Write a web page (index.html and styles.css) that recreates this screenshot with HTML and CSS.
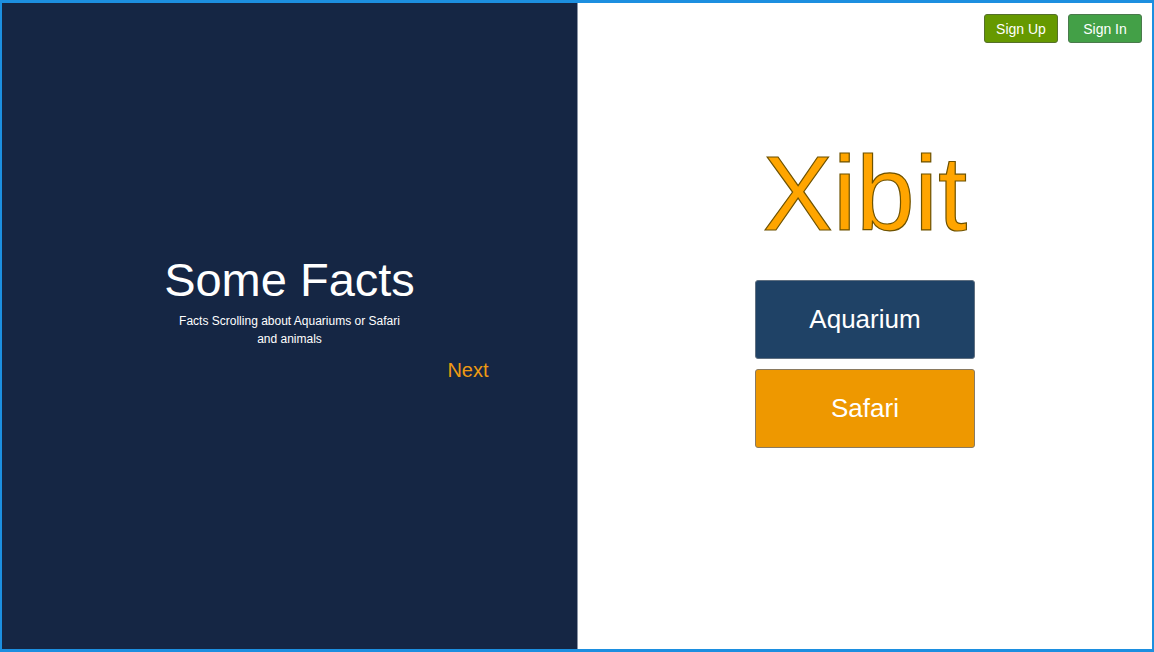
FILE: index.html
```html
<!DOCTYPE html>
<html>
<head>
<meta charset="utf-8">
<link rel="stylesheet" href="styles.css">
</head>
<body>
<div class="frame">
  <section class="facts-panel">
    <div class="facts">
      <h1 class="facts-title">Some Facts</h1>
      <p class="facts-text">Facts Scrolling about Aquariums or Safari and animals</p>
      <div class="facts-next">Next</div>
    </div>
  </section>
  <section class="main-panel">
    <header class="auth">
      <button class="auth-btn signup">Sign Up</button>
      <button class="auth-btn signin">Sign In</button>
    </header>
    <div class="brand">Xibit</div>
    <div class="choices">
      <button class="choice aquarium">Aquarium</button>
      <button class="choice safari">Safari</button>
    </div>
  </section>
</div>
</body>
</html>
```

FILE: styles.css
```css
* { box-sizing: border-box; }
html, body { margin: 0; padding: 0; }
body {
  font-family: "Liberation Sans", Arial, sans-serif;
  background: #ffffff;
}
.frame {
  width: 1154px;
  height: 652px;
  border: 2px solid #1c8fe0;
  border-top-width: 3px;
  border-bottom-width: 3px;
  display: flex;
}
.facts-panel {
  width: 576px;
  background: #152644;
  border-right: 1px solid #8a94a6;
  flex: none;
  padding-top: 250px;
}
.facts {
  width: 398px;
  margin: 0 auto;
  color: #ffffff;
  text-align: center;
}
.facts-title {
  margin: 0;
  font-size: 47px;
  font-weight: normal;
  line-height: 54px;
}
.facts-text {
  width: 240px;
  margin: 5px auto 0;
  font-size: 12px;
  line-height: 18px;
}
.facts-next {
  margin-top: 10px;
  text-align: right;
  color: #ee9a12;
  font-size: 20px;
  line-height: 24px;
}
.main-panel {
  flex: 1;
  display: flex;
  flex-direction: column;
  align-items: center;
  padding-top: 11px;
}
.auth {
  align-self: stretch;
  display: flex;
  justify-content: flex-end;
  gap: 10px;
  padding-right: 10px;
}
.auth-btn {
  width: 74px;
  height: 29px;
  border: 1px solid #5a6a50;
  border-radius: 3px;
  color: #ffffff;
  font-family: "Liberation Sans", Arial, sans-serif;
  font-size: 14px;
  padding: 0;
}
.signup { background: #669900; border-color: #55702a; }
.signin { background: #43a047; border-color: #4a7a4c; }
.brand {
  margin-top: 98px;
  font-size: 105px;
  line-height: 106px;
  color: #ffa500;
  -webkit-text-stroke: 1.2px #6e5200;
}
.choices {
  margin-top: 33px;
  display: flex;
  flex-direction: column;
  gap: 10px;
}
.choice {
  width: 220px;
  height: 79px;
  border: 1px solid #7f848a;
  border-radius: 3px;
  color: #ffffff;
  font-family: "Liberation Sans", Arial, sans-serif;
  font-size: 26px;
  padding: 0;
}
.aquarium { background: #1f4266; border-color: #5f6f80; }
.safari { background: #ee9800; border-color: #8a7a60; }
```
